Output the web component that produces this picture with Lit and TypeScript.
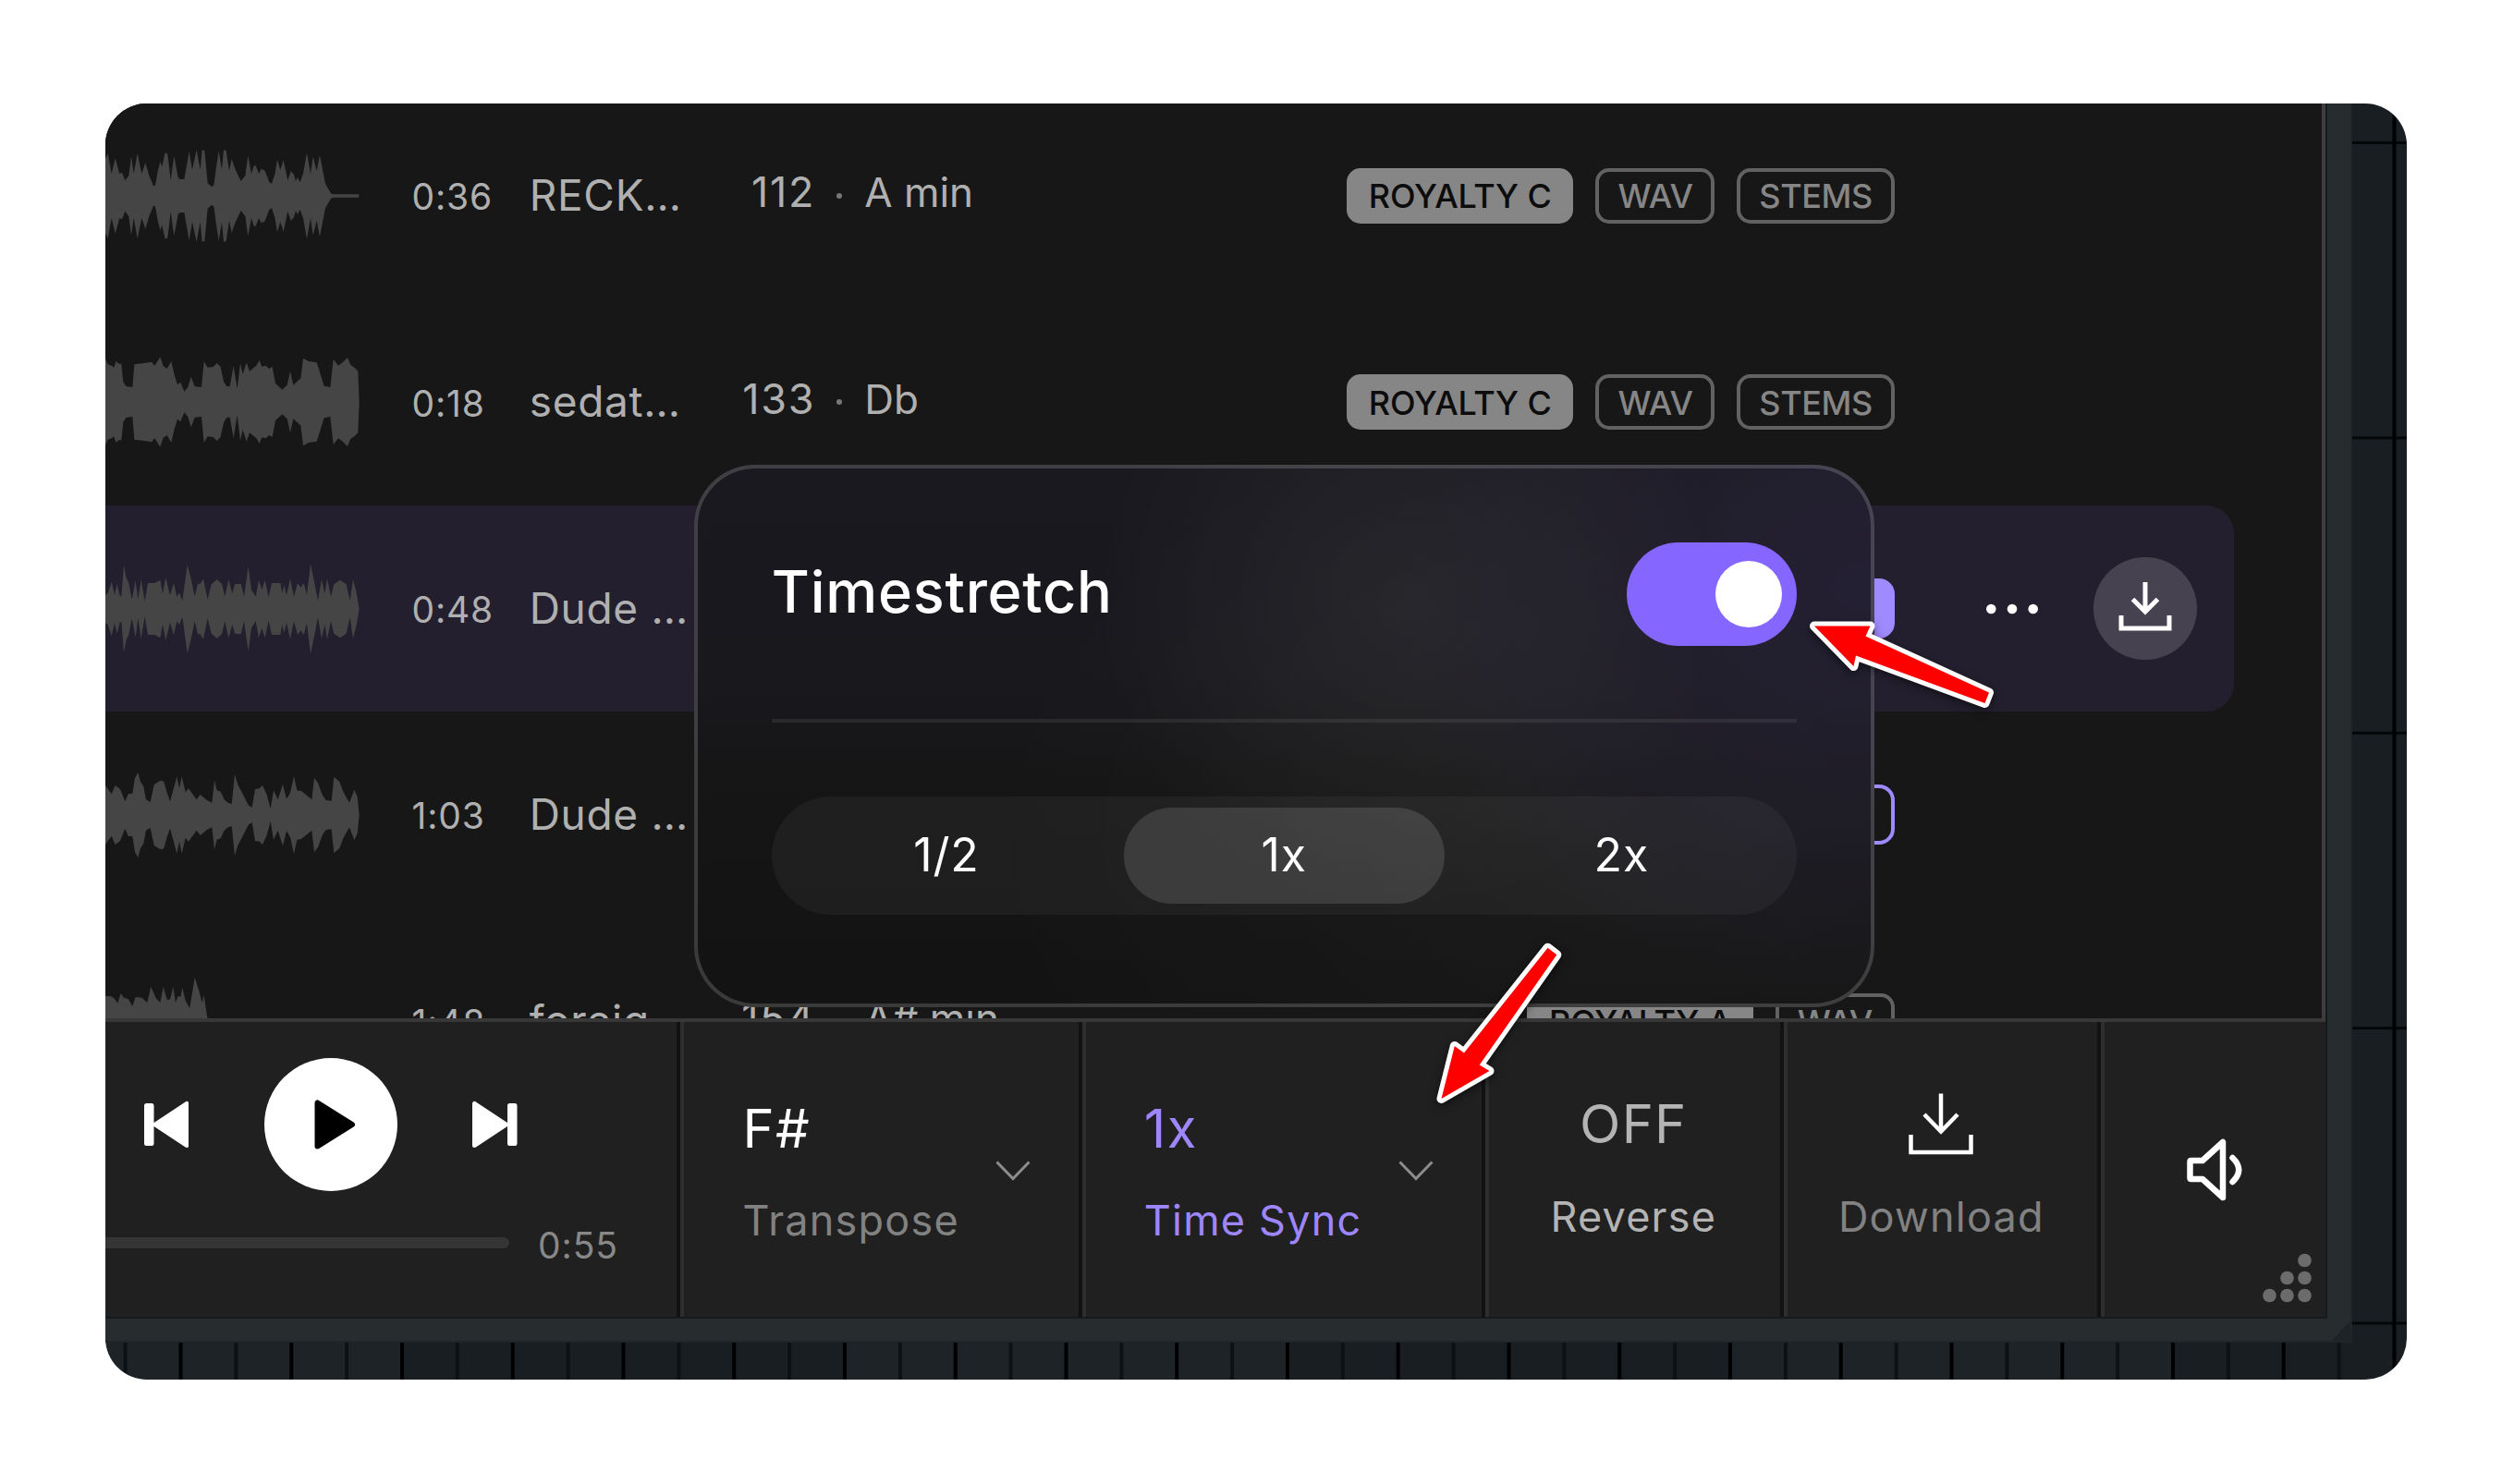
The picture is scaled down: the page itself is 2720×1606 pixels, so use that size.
import { LitElement, html, svg, css, nothing } from 'lit';
import { customElement, property, state } from 'lit/decorators.js';
import { classMap } from 'lit/directives/class-map.js';

interface Tag {
  label: string;
  kind: 'solid' | 'outline' | 'accent-solid' | 'accent-outline';
}

interface Track {
  wave: number[];
  time: string;
  title: string;
  bpm?: string;
  key?: string;
  tags: Tag[];
  active?: boolean;
}

// x, amplitude pairs, in thirds of a pixel
const WAVES = {
  reck: [0,120,8,138,20,72,32,122,46,72,54,76,64,50,76,66,84,128,92,72,104,138,118,72,130,108,142,66,156,32,162,34,170,80,178,112,184,95,194,140,202,136,212,52,223,130,236,60,242,54,256,54,272,145,282,85,296,149,308,85,314,149,322,146,332,42,344,30,352,34,358,80,368,146,378,85,384,149,392,148,402,80,410,120,420,90,440,48,454,66,463,131,474,72,482,98,488,98,498,72,506,88,518,82,532,44,540,40,550,70,558,118,568,84,578,116,592,50,602,80,612,70,618,48,624,60,632,44,642,72,654,140,666,72,674,128,686,80,696,133,706,80,714,40,732,8,740,5,823,5],
  sedat: [0,140,8,122,20,118,28,112,34,132,44,124,52,124,58,65,68,50,88,48,94,122,120,125,150,130,160,118,178,146,188,116,200,108,214,132,224,88,234,56,244,64,256,34,268,48,278,82,290,50,312,48,320,132,332,112,350,114,362,126,374,114,384,66,394,50,404,50,416,118,428,42,438,125,446,90,458,128,468,100,478,108,490,118,500,135,508,115,520,118,532,108,542,114,552,60,574,40,590,55,600,100,610,54,626,70,634,76,642,142,660,132,686,128,698,90,710,52,730,48,740,138,756,118,770,128,786,144,796,120,810,110,820,100,824,0],
  dude: [0,46,8,50,20,88,30,46,38,80,46,46,52,40,60,142,68,100,76,84,86,30,98,92,106,30,116,96,128,25,138,84,160,84,178,94,186,50,196,102,210,44,222,84,232,40,240,52,250,26,266,144,278,98,290,40,300,82,308,82,318,98,332,30,344,80,362,96,378,82,388,40,400,96,412,50,420,80,440,82,450,40,464,138,474,62,488,40,498,94,508,62,518,94,530,38,540,84,568,84,574,50,580,78,588,44,600,98,612,40,624,84,634,70,644,84,654,46,666,146,678,88,690,28,702,96,712,50,720,98,732,40,742,80,762,94,782,80,794,26,804,96,816,48,824,0],
  dude2: [0,96,20,68,32,96,48,84,64,44,74,68,88,70,96,120,106,138,114,108,124,92,132,50,146,42,158,98,172,108,182,112,190,108,200,72,210,44,220,80,232,125,240,86,248,125,260,74,270,86,296,50,308,66,330,48,346,40,354,112,362,80,374,76,386,50,398,40,410,36,420,132,430,98,446,68,464,32,476,24,486,84,500,86,510,96,524,66,536,20,546,80,560,50,576,100,588,52,600,72,612,126,622,80,636,78,670,50,678,120,690,104,704,66,716,48,734,46,742,124,760,108,772,76,792,40,808,82,818,60,824,0],
  foreig: [0,82,18,80,28,74,40,58,50,90,60,76,74,72,88,48,98,78,118,76,136,60,148,112,164,74,178,60,188,112,200,70,210,70,220,112,228,60,236,82,244,78,250,108,260,66,274,42,290,142,304,98,314,60,320,84,328,30,332,6],
};

const TRACKS: Track[] = [
  {
    wave: WAVES.reck, time: '0:36', title: 'RECK…', bpm: '112', key: 'A min',
    tags: [{ label: 'ROYALTY C', kind: 'solid' }, { label: 'WAV', kind: 'outline' }, { label: 'STEMS', kind: 'outline' }],
  },
  {
    wave: WAVES.sedat, time: '0:18', title: 'sedat…', bpm: '133', key: 'Db',
    tags: [{ label: 'ROYALTY C', kind: 'solid' }, { label: 'WAV', kind: 'outline' }, { label: 'STEMS', kind: 'outline' }],
  },
  {
    wave: WAVES.dude, time: '0:48', title: 'Dude …', active: true,
    tags: [{ label: '', kind: 'accent-solid' }],
  },
  {
    wave: WAVES.dude2, time: '1:03', title: 'Dude …',
    tags: [{ label: '', kind: 'accent-outline' }],
  },
  {
    wave: WAVES.foreig, time: '1:48', title: 'foreig…', bpm: '154', key: 'A# min',
    tags: [{ label: 'ROYALTY A', kind: 'solid' }, { label: 'WAV', kind: 'outline' }],
  },
];

@customElement('track-row')
export class TrackRow extends LitElement {
  @property({ attribute: false }) track!: Track;

  static styles = css`
    :host {
      display: block;
      flex: none;
    }
    .row {
      display: grid;
      grid-template-columns: 274.4px 127.5px 246.8px 119.5px 53px 300px 814.6px auto;
      align-items: center;
      box-sizing: border-box;
      width: 2302.7px;
      height: 223.35px;
      color: #b0b0b0;
      font-size: 46px;
      line-height: 56px;
      white-space: nowrap;
    }
    .row.active {
      background: #241f2e;
      border-radius: 0 30px 30px 0;
    }
    .wave {
      display: block;
      width: 275px;
      height: 100px;
      fill: #454545;
    }
    .time {
      padding: 3px 0 0 57px;
      font-size: 39px;
      letter-spacing: 0.9px;
    }
    .title {
      padding: 0 0 2px 56.8px;
      letter-spacing: 0.7px;
    }
    .bpm {
      padding-bottom: 7px;
      text-align: right;
      font-size: 45px;
      letter-spacing: 1.7px;
    }
    .dot {
      justify-self: center;
      width: 6px;
      height: 6px;
      margin-right: 2px;
      border-radius: 50%;
      background: #777;
    }
    .key {
      padding-bottom: 7px;
      font-size: 44px;
    }
    .tags {
      display: flex;
      justify-content: flex-end;
      align-items: center;
      gap: 24px;
    }
    .tag {
      display: flex;
      align-items: center;
      justify-content: center;
      box-sizing: border-box;
      min-width: 127.7px;
      height: 60.5px;
      padding: 1px 19.9px 0;
      border: 4px solid #626262;
      border-radius: 15px;
      color: #868686;
      font-size: 36px;
      font-weight: 500;
      letter-spacing: -0.4px;
    }
    .tag.solid {
      background: #868686;
      border-color: #868686;
      color: #0c0c0c;
      letter-spacing: -0.2px;
    }
    .tag.accent-solid,
    .tag.accent-outline {
      height: 65px;
      border-color: #a08aff;
      border-radius: 17px;
    }
    .tag.accent-solid {
      background: #a08aff;
    }
    .actions {
      display: flex;
      align-items: center;
      gap: 60px;
      padding-left: 99.5px;
    }
    .more {
      width: 56px;
      height: 12px;
      fill: #fff;
    }
    .download {
      display: grid;
      place-items: center;
      width: 111.5px;
      height: 111.5px;
      border-radius: 50%;
      background: #47424f;
    }
    .download svg {
      width: 58px;
      height: 54px;
      padding-bottom: 3px;
      fill: none;
      stroke: #fff;
      stroke-width: 5;
    }
  `;

  private wavePath(points: number[]) {
    const top: string[] = [];
    const bottom: string[] = [];
    for (let i = 0; i < points.length; i += 2) {
      top.push(`${points[i]} ${150 - points[i + 1]}`);
      bottom.unshift(`${points[i]} ${150 + points[i + 1]}`);
    }
    return `M${top.join('L')}L${bottom.join('L')}Z`;
  }

  render() {
    const t = this.track;
    return html`
      <div class=${classMap({ row: true, active: !!t.active })}>
        <svg class="wave" viewBox="0 0 825 300" preserveAspectRatio="none">
          <path d=${this.wavePath(t.wave)} />
        </svg>
        <span class="time">${t.time}</span>
        <span class="title">${t.title}</span>
        <span class="bpm">${t.bpm}</span>
        ${t.bpm ? html`<span class="dot"></span>` : html`<span></span>`}
        <span class="key">${t.key}</span>
        <div class="tags">
          ${t.tags.map((tag) => html`<span class="tag ${tag.kind}">${tag.label}</span>`)}
        </div>
        ${t.active
          ? html`
              <div class="actions">
                <svg class="more" viewBox="0 0 56 12">
                  <circle cx="5.3" cy="6" r="5.3" />
                  <circle cx="28" cy="6" r="5.3" />
                  <circle cx="50.7" cy="6" r="5.3" />
                </svg>
                <div class="download">
                  <svg viewBox="0 0 58 54">
                    <path d="M29 0V32M15.5 18.5L29 32L42.5 18.5M3 36V50H55V36" />
                  </svg>
                </div>
              </div>
            `
          : nothing}
      </div>
    `;
  }
}

@customElement('timestretch-popup')
export class TimestretchPopup extends LitElement {
  @state() private speed = '1x';

  static styles = css`
    :host {
      display: flex;
      flex-direction: column;
      box-sizing: border-box;
      padding: 80px;
      border: 4px solid rgba(255, 255, 255, 0.17);
      border-radius: 66px;
      background:
        radial-gradient(340px 340px at 770px 150px, rgba(255, 255, 240, 0.05), transparent),
        radial-gradient(500px 470px at 1260px 130px, #242033, rgba(36, 32, 51, 0)),
        radial-gradient(700px 500px at 1000px 400px, rgba(255, 255, 255, 0.03), transparent),
        linear-gradient(#1a191f, #19181d 38%, #151515 62%, #131313);
      background-origin: border-box;
      color: #fff;
    }
    .header {
      display: flex;
      align-items: center;
      justify-content: space-between;
      height: 112px;
    }
    .name {
      padding-bottom: 7px;
      font-size: 63px;
      font-weight: 500;
      line-height: 76px;
      letter-spacing: 0.75px;
    }
    .toggle {
      display: flex;
      align-items: center;
      justify-content: flex-end;
      box-sizing: border-box;
      width: 183.4px;
      height: 112px;
      padding-right: 15.5px;
      border-radius: 56px;
      background: #8566ff;
    }
    .knob {
      width: 72.5px;
      height: 72.5px;
      border-radius: 50%;
      background: #fff;
    }
    .divider {
      height: 4px;
      margin: 79.4px 0;
      background: rgba(255, 255, 255, 0.08);
    }
    .speeds {
      display: flex;
      align-items: center;
      justify-content: space-between;
      box-sizing: border-box;
      height: 128px;
      padding: 0 15.5px;
      border-radius: 64px;
      background: rgba(255, 255, 255, 0.042);
    }
    .speed {
      width: 347.4px;
      height: 104px;
      border-radius: 52px;
      font-size: 50px;
      line-height: 102px;
      letter-spacing: 0.9px;
      text-align: center;
    }
    .speed.selected {
      background: rgba(255, 255, 255, 0.125);
    }
  `;

  render() {
    return html`
      <div class="header">
        <span class="name">Timestretch</span>
        <div class="toggle"><div class="knob"></div></div>
      </div>
      <div class="divider"></div>
      <div class="speeds">
        ${['1/2', '1x', '2x'].map(
          (s) => html`
            <div class=${classMap({ speed: true, selected: s === this.speed })} @click=${() => (this.speed = s)}>${s}</div>
          `
        )}
      </div>
    `;
  }
}

@customElement('player-bar')
export class PlayerBar extends LitElement {
  static styles = css`
    :host {
      display: flex;
      flex: 1;
      background: #202020;
      line-height: 54px;
    }
    .cell {
      display: flex;
      flex: none;
      box-sizing: border-box;
      border-left: 4px solid #2e2e2e;
      border-right: 4px solid #121212;
    }
    .transport {
      flex-direction: column;
      gap: 34px;
      width: 622px;
      padding-top: 39.3px;
      border-left: none;
    }
    .buttons {
      display: flex;
      align-items: center;
      gap: 81.5px;
      padding-left: 41.5px;
    }
    .skip {
      width: 48.5px;
      height: 52px;
      fill: #fff;
      stroke: #fff;
      stroke-width: 5;
      stroke-linejoin: round;
    }
    .play {
      display: grid;
      place-items: center;
      width: 144px;
      height: 144px;
      border-radius: 50%;
      background: #fff;
    }
    .play svg {
      width: 44px;
      height: 56px;
      padding-left: 8px;
      stroke: #000;
      stroke-width: 6;
      stroke-linejoin: round;
    }
    .progress {
      display: flex;
      align-items: center;
      gap: 31px;
      height: 48px;
    }
    .rail {
      width: 437px;
      height: 12px;
      margin-bottom: 4px;
      border-radius: 0 6px 6px 0;
      background: #353535;
    }
    .remaining {
      padding-top: 2px;
      color: #888;
      font-size: 39px;
      letter-spacing: 0.9px;
    }
    .select {
      justify-content: space-between;
      width: 435.35px;
      padding: 79.6px 52px 0 63.5px;
    }
    .stack {
      display: flex;
      flex-direction: column;
      gap: 38.6px;
    }
    .value {
      font-size: 58px;
      line-height: 70px;
      letter-spacing: 1.2px;
      color: #fff;
    }
    .label {
      font-size: 45px;
      letter-spacing: 1.2px;
      color: #828282;
    }
    .accent .stack {
      margin-left: -1px;
    }
    .accent .value,
    .accent .label {
      color: #9e86ff;
    }
    .chevron {
      width: 38px;
      height: 22px;
      margin-top: 70px;
      fill: none;
      stroke: #8c8c8c;
      stroke-width: 3;
    }
    .button {
      justify-content: center;
      padding: 75.4px 2px 0 0;
      text-align: center;
    }
    .button .stack {
      align-items: center;
    }
    .reverse {
      width: 323.3px;
    }
    .reverse .value,
    .reverse .label {
      color: #b4b4b4;
    }
    .download {
      width: 342.7px;
    }
    .tray {
      width: 70px;
      height: 70px;
      fill: none;
      stroke: #fff;
      stroke-width: 4.5;
    }
    .volume {
      position: relative;
      align-items: center;
      justify-content: center;
      width: 243.2px;
      border-right: none;
    }
    .speaker {
      width: 66px;
      height: 70px;
      fill: none;
      stroke: #fff;
      stroke-width: 6.5;
      stroke-linejoin: round;
      stroke-linecap: round;
    }
    /* resize grip sits over the corner of the volume cell */
    .grip {
      position: absolute;
      right: 15px;
      bottom: 15px;
      width: 53px;
      height: 54px;
      fill: #6c6c6c;
    }
  `;

  private select(value: string, label: string, accent = false) {
    return html`
      <div class=${classMap({ cell: true, select: true, accent })}>
        <div class="stack">
          <span class="value">${value}</span>
          <span class="label">${label}</span>
        </div>
        <svg class="chevron" viewBox="0 0 38 22"><path d="M1.5 1.5L19 19.5L36.5 1.5" /></svg>
      </div>
    `;
  }

  render() {
    return html`
      <div class="cell transport">
        <div class="buttons">
          <svg class="skip" viewBox="0 0 48.5 52">
            <path d="M2.5 5.5H8V46.5H2.5ZM12 26L46 3.5V48.5Z" />
          </svg>
          <div class="play"><svg viewBox="0 0 44 56"><path d="M3.5 4.5V51.5L41 28Z" /></svg></div>
          <svg class="skip" viewBox="0 0 48.5 52">
            <path d="M46 5.5H40.5V46.5H46ZM36.5 26L2.5 3.5V48.5Z" />
          </svg>
        </div>
        <div class="progress">
          <div class="rail"></div>
          <span class="remaining">0:55</span>
        </div>
      </div>
      ${this.select('F#', 'Transpose')} ${this.select('1x', 'Time Sync', true)}
      <div class="cell button reverse">
        <div class="stack">
          <span class="value">OFF</span>
          <span class="label">Reverse</span>
        </div>
      </div>
      <div class="cell button download">
        <div class="stack">
          <svg class="tray" viewBox="0 0 70 70">
            <path d="M35 2.5V43M17 25L35 43.5L53 25M2.5 47V66H67.5V47" />
          </svg>
          <span class="label">Download</span>
        </div>
      </div>
      <div class="cell volume">
        <svg class="speaker" viewBox="0 0 66 70">
          <path d="M6.5 26Q6.5 25 8 25H20L42 5V65L20 45H8Q6.5 45 6.5 44Z" />
          <path d="M52.5 22Q66 35 52.5 48" />
        </svg>
        <svg class="grip" viewBox="0 0 53 54">
          ${[[45.5, 8], [26.5, 27], [45.5, 27], [7.5, 46], [26.5, 46], [45.5, 46]].map(
            ([x, y]) => svg`<circle cx=${x} cy=${y} r="7.3" />`
          )}
        </svg>
      </div>
    `;
  }
}

@customElement('app-root')
export class AppRoot extends LitElement {
  static styles = css`
    :host {
      display: block;
      box-sizing: border-box;
      width: 2720px;
      height: 1606px;
      padding: 112px 116px 113px 114px;
      background: #fff;
      font-family: Inter, 'Noto Sans', sans-serif;
    }
    /* sequencer grid behind the plugin window */
    .desktop {
      position: relative;
      height: 1381px;
      overflow: hidden;
      border-radius: 45px;
      background:
        linear-gradient(90deg, #000 4px, transparent 4px 59.9px, #0b1115 59.9px 63.9px, transparent 63.9px) 79.5px 0 /
          119.75px 100%,
        linear-gradient(#040708 3px, transparent 3px) 0 41px / 100% 319.4px,
        linear-gradient(90deg, #191e22 50%, #1d2327 50%) 321px 0 / 958px 100%;
    }
    .window {
      box-sizing: border-box;
      width: 2430.6px;
      height: 1341px;
      padding: 0 28.6px 28px 0;
      background:
        linear-gradient(to bottom right, transparent 50%, #1e2327 50%) right bottom / 25px 25px no-repeat,
        #272c2f;
      box-shadow: inset -2px -2px #202529;
    }
    .app {
      display: flex;
      flex-direction: column;
      height: 1313px;
      box-shadow: 0 0 0 2px #141a1e;
    }
    .list {
      display: flex;
      flex-direction: column;
      box-sizing: border-box;
      height: 994px;
      overflow: hidden;
      border-right: 4px solid #3d3d3d;
      border-bottom: 4px solid #383838;
      background: #171717;
    }
    .list track-row:first-child {
      margin-top: -11.8px;
    }
    .popup {
      position: absolute;
      left: 636.8px;
      top: 391px;
      width: 1276.8px;
      height: 586.5px;
    }
    .arrows {
      position: absolute;
      inset: 0;
      width: 2490px;
      height: 1381px;
      fill: #f00;
      stroke: #fff;
      stroke-width: 10;
      stroke-linejoin: round;
      paint-order: stroke;
      filter: drop-shadow(0 3px 5px rgba(0, 0, 0, 0.5));
    }
  `;

  render() {
    return html`
      <div class="desktop">
        <div class="window">
          <div class="app">
            <div class="list">${TRACKS.map((t) => html`<track-row .track=${t}></track-row>`)}</div>
            <player-bar></player-bar>
          </div>
        </div>
        <timestretch-popup class="popup"></timestretch-popup>
        <svg class="arrows" viewBox="114 112 2490 1381">
          <path d="M1963 677.5L2023.5 677.5L2018.500 688.500L2152 749.500L2147.500 761L2008 709.500L2005.500 721Z" />
          <path d="M1559.500 1189L1573.800 1132L1584 1139.500L1674.600 1025.700L1684.300 1033.300L1600.700 1152.500L1611.500 1159Z" />
        </svg>
      </div>
    `;
  }
}
